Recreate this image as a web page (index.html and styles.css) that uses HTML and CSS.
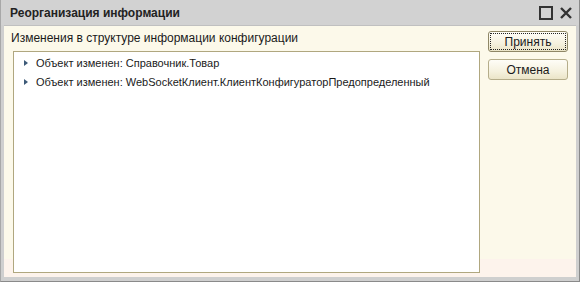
FILE: index.html
```html
<!DOCTYPE html>
<html>
  <head>
    <meta charset="UTF-8" />
    <title>Реорганизация информации</title>
    <link rel="stylesheet" href="styles.css">
  </head>
  <body>
    <div class="window">
      <div class="titlebar">
        <span class="title">Реорганизация информации</span>
        <div class="title-buttons">
          <svg width="14" height="14" viewBox="0 0 14 14">
            <rect x="1" y="1" width="12" height="12" fill="none" stroke="#333" stroke-width="2" />
          </svg>
          <svg width="14" height="14" viewBox="0 0 14 14">
            <path d="M2 2L12 12M12 2L2 12" stroke="#333" stroke-width="2.4" />
          </svg>
        </div>
      </div>

      <div class="content">
        <div class="main">
          <div class="caption">Изменения в структуре информации конфигурации</div>
          <div class="tree">
            <div class="tree-row">
              <span class="arrow"></span>
              Объект изменен: Справочник.Товар
            </div>
            <div class="tree-row">
              <span class="arrow"></span>
              Объект изменен: WebSocketКлиент.КлиентКонфигураторПредопределенный
            </div>
          </div>
        </div>

        <div class="side">
          <button class="btn default">Принять</button>
          <button class="btn">Отмена</button>
        </div>
      </div>
    </div>
  </body>
</html>
```

FILE: styles.css
```css
* {
  margin: 0;
  padding: 0;
  box-sizing: border-box;
}

body {
  font-family: "Liberation Sans", Arial, sans-serif;
  font-size: 12px;
  color: #1a1a1a;
  background: #c8c8c8;
}

.window {
  width: 580px;
  height: 282px;
  display: flex;
  flex-direction: column;
  background: #cfcfcf;
  border-left: 1px solid #a8a8a8;
  border-right: 1px solid #8a8a8a;
  border-bottom: 1px solid #8a8a8a;
}

.titlebar {
  height: 25px;
  display: flex;
  align-items: center;
  justify-content: space-between;
  padding: 0 6px 0 9px;
  background: #d2d2d2;
}

.title {
  font-weight: bold;
  font-size: 12px;
  color: #222;
}

.title-buttons {
  display: flex;
  gap: 6px;
  padding-top: 1px;
}

.content {
  flex: 1;
  display: flex;
  margin: 0 3px 4px 3px;
  background: linear-gradient(180deg, #fcf9ea 0%, #fcf9ea 93%, #fdf3ec 93%, #fdf3ec 100%);
  border-top: 1px solid #c0c0c0;
  padding: 5px 8px 4px 6px;
}

.main {
  flex: 1;
  display: flex;
  flex-direction: column;
}

.caption {
  height: 20px;
  padding-left: 1px;
  line-height: 14px;
}

.tree {
  flex: 1;
  margin-left: 3px;
  background: #fff;
  border: 1px solid #b0a77f;
  padding-top: 1px;
  font-size: 11px;
}

.tree-row {
  height: 19px;
  display: flex;
  align-items: center;
  padding-left: 10px;
}

.arrow {
  width: 0;
  height: 0;
  border-top: 3px solid transparent;
  border-bottom: 3px solid transparent;
  border-left: 4px solid #3d5a78;
  margin-right: 8px;
}

.side {
  width: 88px;
  display: flex;
  flex-direction: column;
  align-items: flex-end;
  gap: 7px;
}

.btn {
  width: 80px;
  height: 21px;
  font-family: "Liberation Sans", Arial, sans-serif;
  font-size: 12px;
  color: #1a1a1a;
  border: 1px solid #b5ad8a;
  border-radius: 3px;
  background: linear-gradient(180deg, #fefdf7 0%, #f5f1de 60%, #ebe5c8 100%);
}

.btn.default {
  outline: 1px dotted #222;
  outline-offset: -3px;
  border-color: #8f8766;
}
```
